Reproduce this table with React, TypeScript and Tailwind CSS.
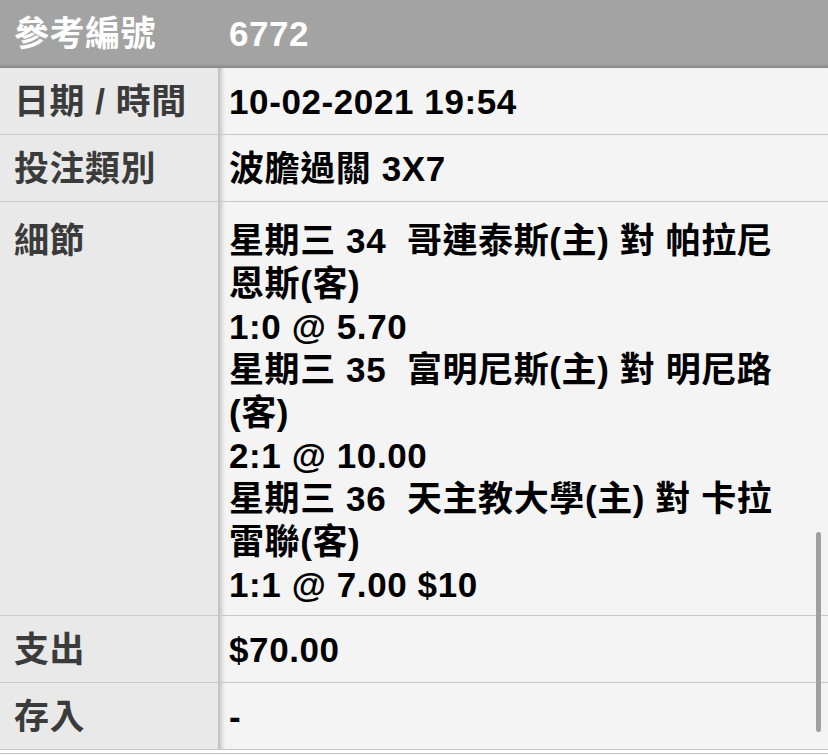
const font = { fontFamily: '"Liberation Sans", "Noto Sans CJK TC", sans-serif' };

const rows = [
  { label: "日期 / 時間", value: ["10-02-2021 19:54"] },
  { label: "投注類別", value: ["波膽過關 3X7"] },
  {
    label: "細節",
    value: [
      "星期三 34  哥連泰斯(主) 對 帕拉尼",
      "恩斯(客)",
      "1:0 @ 5.70",
      "星期三 35  富明尼斯(主) 對 明尼路",
      "(客)",
      "2:1 @ 10.00",
      "星期三 36  天主教大學(主) 對 卡拉",
      "雷聯(客)",
      "1:1 @ 7.00 $10",
    ],
    tall: true,
  },
  { label: "支出", value: ["$70.00"] },
  { label: "存入", value: ["-"] },
];

function Row({ label, value, tall }: { label: string; value: string[]; tall?: boolean }) {
  return (
    <div className={`flex border-b border-[#c9c9c9] ${tall ? "h-[414px]" : "h-[67px]"}`}>
      <div
        className={`w-[218px] shrink-0 bg-[#e9e9e9] pl-[14px] text-[35px] font-bold text-[#3b3b3b] leading-[43px] tracking-[0.5px] flex ${
          tall ? "items-start pt-[17px]" : "items-center"
        }`}
      >
        <span className="whitespace-pre">{label}</span>
      </div>
      <div
        className={`flex-1 bg-[#f4f4f4] pl-[11px] text-[35px] font-bold text-black leading-[43px] tracking-[0.6px] shadow-[inset_7px_0_5px_-4px_rgba(0,0,0,0.25)] flex flex-col ${
          tall ? "justify-start pt-[17px]" : "justify-center"
        }`}
      >
        {value.map((v, i) => (
          <div key={i} className="whitespace-pre">
            {v}
          </div>
        ))}
      </div>
    </div>
  );
}

export default function App() {
  return (
    <div className="relative w-[828px] h-[755px] overflow-hidden bg-white" style={font}>
      <div className="h-[68px] flex items-center bg-[#a3a3a3] shadow-[inset_0_-4px_3px_-2px_rgba(0,0,0,0.18)] text-white text-[35px] font-bold tracking-[0.5px]">
        <span className="w-[218px] pl-[14px]">參考編號</span>
        <span className="pl-[11px]">6772</span>
      </div>
      {rows.map((r) => (
        <Row key={r.label} {...r} />
      ))}
      <div className="mt-[3px] border-t border-[#c9c9c9] h-[10px] bg-[#f2f2f2]" />
      <div className="absolute left-[816px] top-[532px] w-[5px] h-[200px] rounded-full bg-[#9f9f9f]" />
    </div>
  );
}
